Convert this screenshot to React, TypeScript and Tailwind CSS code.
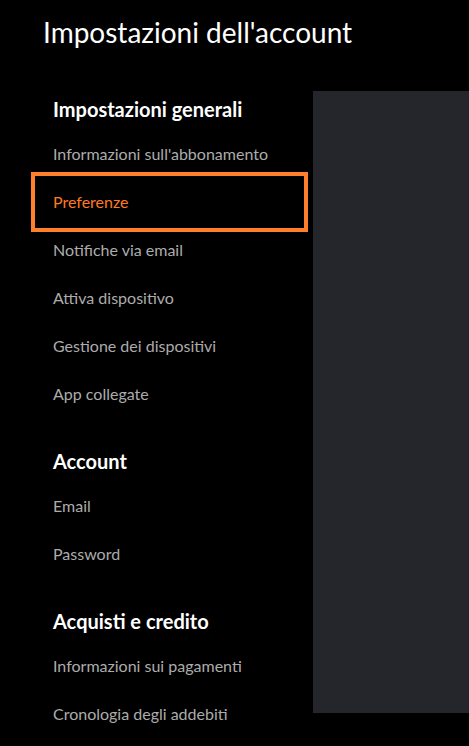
import React from 'react';

interface NavSection {
  title: string;
  items: string[];
}

const sections: NavSection[] = [
  {
    title: 'Impostazioni generali',
    items: [
      "Informazioni sull'abbonamento",
      'Preferenze',
      'Notifiche via email',
      'Attiva dispositivo',
      'Gestione dei dispositivi',
      'App collegate',
    ],
  },
  {
    title: 'Account',
    items: ['Email', 'Password'],
  },
  {
    title: 'Acquisti e credito',
    items: ['Informazioni sui pagamenti', 'Cronologia degli addebiti'],
  },
];

const ACTIVE = 'Preferenze';

export default function App() {
  return (
    <div
      className="h-[746px] w-full overflow-hidden bg-black text-white"
      style={{ fontFamily: 'Lato, "Noto Sans", sans-serif' }}
    >
      {/* Page title */}
      <h1 className="pl-[43px] pt-[15px] text-[28px] leading-[34px] font-normal text-white">
        Impostazioni dell'account
      </h1>

      <div className="mt-[42px] flex items-start">
        {/* Left navigation */}
        <nav className="w-[313px] shrink-0 pt-[6px]">
          {sections.map((section, i) => (
            <div key={section.title} className={i > 0 ? 'mt-[31px]' : ''}>
              <h2 className="pl-[53px] text-[20px] leading-6 font-bold text-white">
                {section.title}
              </h2>
              <ul className="mt-[9px]">
                {section.items.map(item => {
                  const active = item === ACTIVE;
                  return (
                    <li
                      key={item}
                      className={`relative ml-[37px] flex h-12 w-[265px] items-center pl-4 text-[16px] ${
                        active ? 'text-[#ff7a21]' : 'text-[#acacac]'
                      }`}
                    >
                      {/* focus ring around the selected item */}
                      {active && (
                        <span className="pointer-events-none absolute -inset-[6px] border-4 border-[#ff7f2a]" />
                      )}
                      {item}
                    </li>
                  );
                })}
              </ul>
            </div>
          ))}
        </nav>

        {/* Content panel */}
        <div className="h-[622px] flex-1 bg-[#25262b]" />
      </div>
    </div>
  );
}
